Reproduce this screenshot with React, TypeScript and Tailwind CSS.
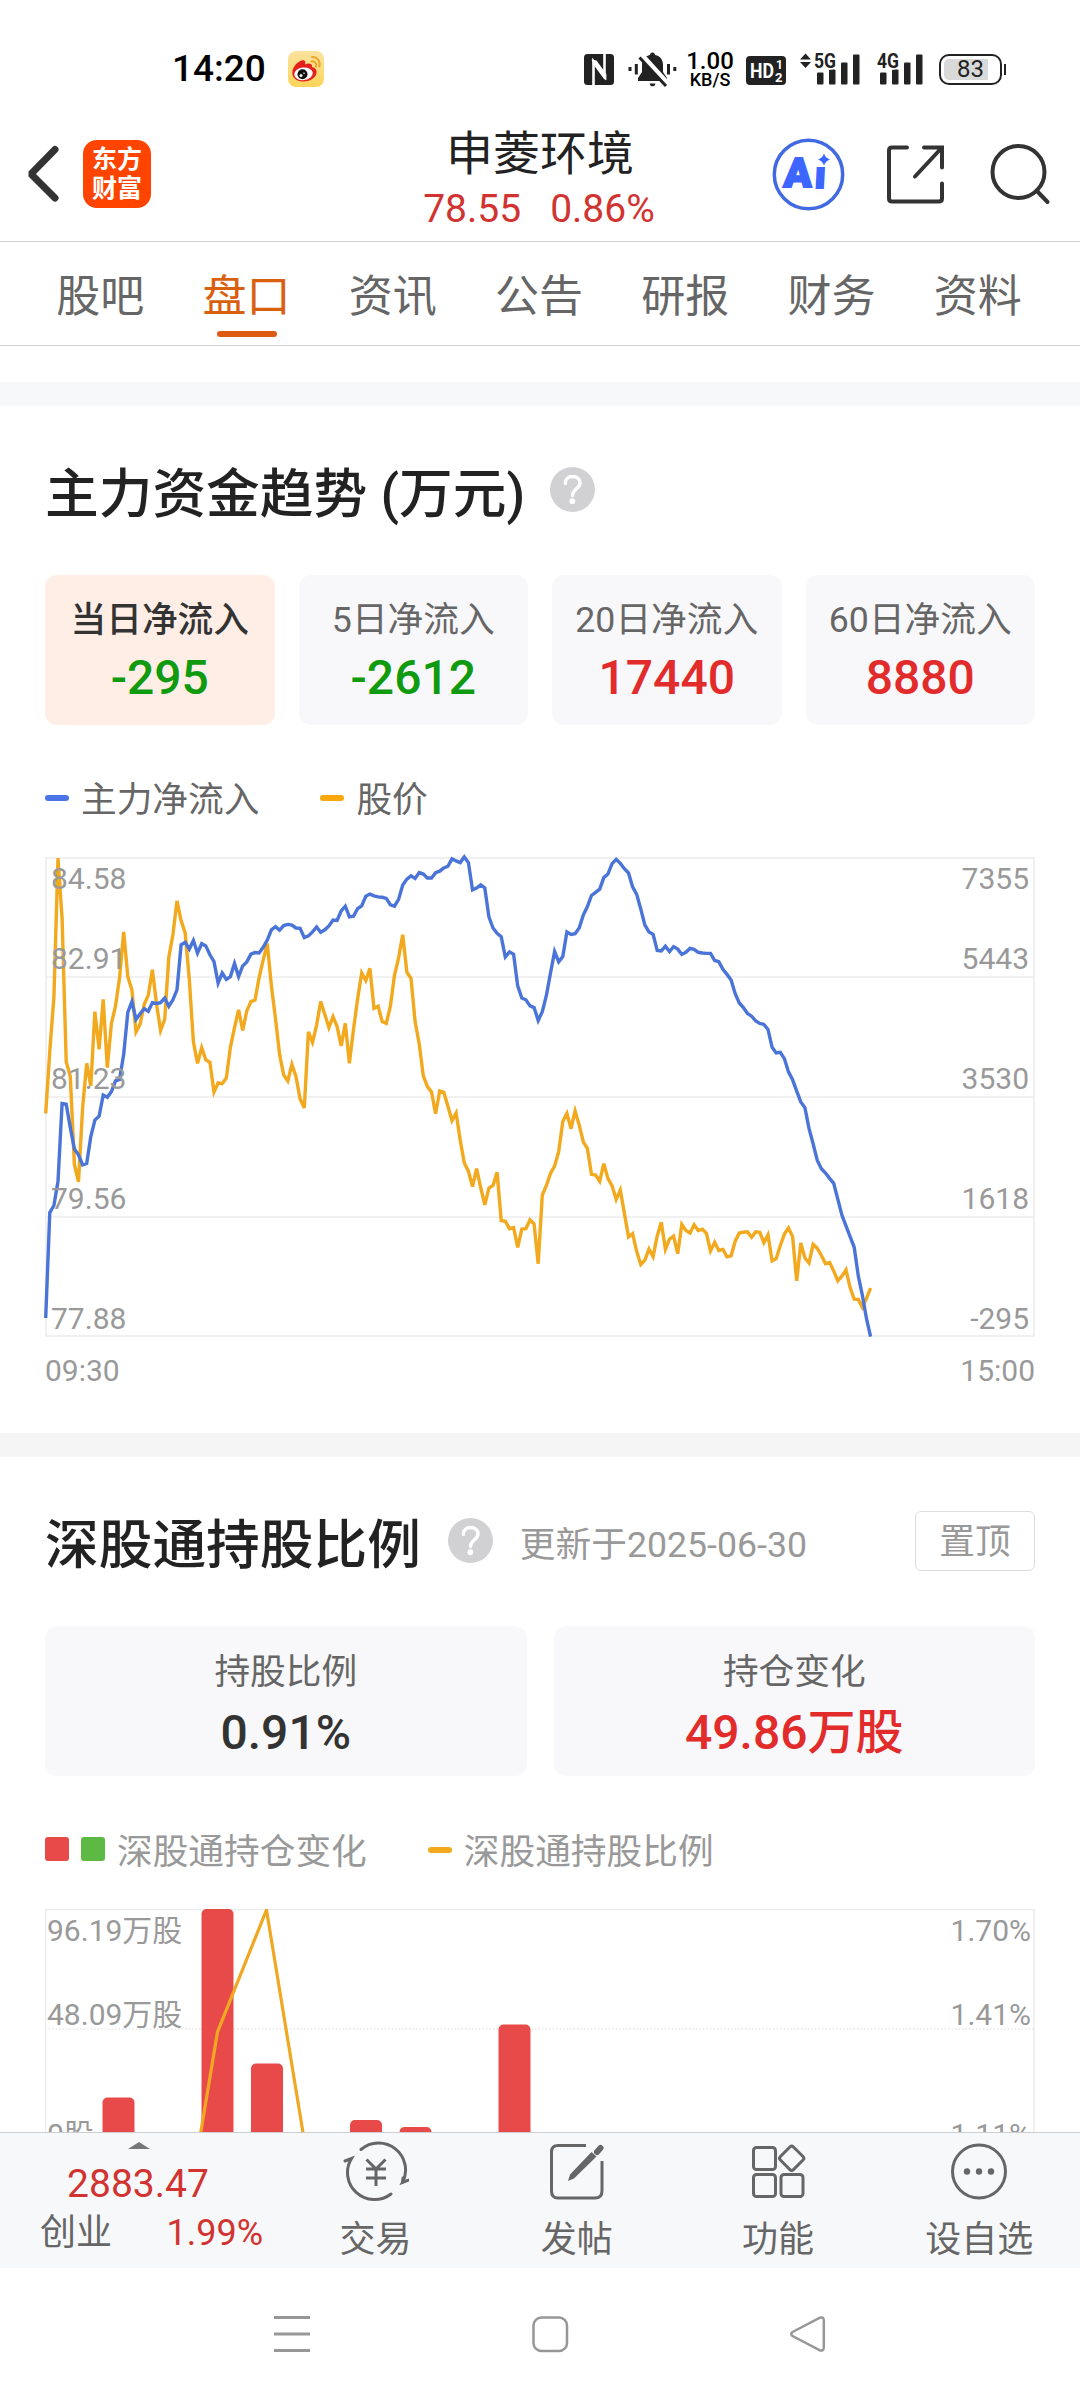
import { ReactNode } from "react";
import clsx from "clsx";

// one value per trading minute, in plot units measured down from the frame top
const inflow = [
    1338, 1043, 1023, 955, 737, 739, 805, 865, 881, 909, 905, 830, 784, 773, 714,
    720, 704, 674, 670, 600, 482, 452, 502, 486, 472, 479, 455, 457, 455, 442,
    465, 447, 419, 293, 286, 305, 281, 316, 290, 296, 321, 340, 400, 372, 390,
    382, 345, 382, 352, 341, 319, 315, 316, 300, 280, 251, 242, 252, 239, 236,
    238, 246, 247, 273, 268, 257, 243, 258, 251, 240, 224, 225, 198, 185, 215,
    213, 192, 184, 157, 151, 156, 159, 160, 163, 181, 185, 166, 126, 109, 100,
    107, 91, 95, 106, 106, 91, 87, 78, 73, 52, 58, 63, 47, 63, 139, 134, 125,
    134, 215, 246, 261, 270, 327, 313, 320, 408, 442, 447, 464, 469, 505, 480,
    435, 372, 312, 341, 326, 257, 264, 262, 246, 210, 186, 155, 146, 137, 105,
    95, 66, 54, 65, 80, 92, 131, 152, 193, 238, 257, 264, 309, 310, 297, 312,
    298, 305, 320, 314, 303, 306, 314, 316, 317, 317, 337, 340, 362, 376, 392,
    430, 456, 469, 485, 493, 506, 513, 516, 530, 580, 596, 594, 612, 649, 671,
    703, 733, 749, 807, 850, 897, 920, 932, 947, 961, 1005, 1050, 1080, 1110,
    1140, 1220, 1275, 1340, 1390,
];

const price = [
    765, 590, 440, 50, 220, 620, 662, 908, 957, 750, 625, 688, 480, 586, 446,
    637, 514, 465, 385, 257, 382, 420, 537, 515, 460, 434, 363, 458, 533, 502,
    328, 265, 170, 225, 260, 390, 565, 625, 581, 615, 622, 705, 680, 682, 666,
    580, 525, 475, 533, 478, 452, 448, 385, 335, 290, 408, 500, 600, 658, 674,
    628, 662, 725, 750, 537, 566, 518, 452, 488, 525, 494, 522, 576, 513, 625,
    530, 445, 372, 393, 359, 471, 465, 508, 513, 465, 378, 330, 265, 370, 387,
    508, 570, 660, 690, 705, 766, 702, 706, 745, 785, 764, 840, 904, 927, 970,
    920, 973, 1021, 974, 967, 930, 1065, 1067, 1088, 1085, 1140, 1089, 1088,
    1063, 1075, 1186, 994, 967, 933, 913, 872, 788, 765, 808, 758, 798, 845,
    864, 936, 938, 955, 906, 947, 968, 1006, 980, 1045, 1111, 1102, 1152, 1188,
    1176, 1145, 1166, 1108, 1070, 1146, 1117, 1109, 1158, 1076, 1093, 1100,
    1077, 1093, 1089, 1101, 1150, 1126, 1149, 1146, 1167, 1164, 1123, 1100,
    1098, 1097, 1112, 1097, 1098, 1127, 1105, 1178, 1172, 1135, 1103, 1086,
    1110, 1234, 1128, 1170, 1184, 1132, 1143, 1163, 1186, 1183, 1206, 1234,
    1221, 1203, 1253, 1285, 1286, 1308, 1283, 1254,
];

const toPoints = (values: number[]) =>
    values
        .map((v, i) => `${(0.7 + i * 4.104).toFixed(1)},${((v - 50) / 2.8 + 1).toFixed(1)}`)
        .join(" ");

const tabs = ["股吧", "盘口", "资讯", "公告", "研报", "财务", "资料"];

const flows = [
    { label: "当日净流入", value: "-295", up: false },
    { label: "5日净流入", value: "-2612", up: false },
    { label: "20日净流入", value: "17440", up: true },
    { label: "60日净流入", value: "8880", up: true },
];

const priceAxis = ["84.58", "82.91", "81.23", "79.56", "77.88"];
const flowAxis = ["7355", "5443", "3530", "1618", "-295"];

// slot = position among the 20 slots of the chart
const holdingBars = [
    { slot: 1, top: 188.5 },
    { slot: 3, top: 0 },
    { slot: 4, top: 154.5 },
    { slot: 6, top: 211 },
    { slot: 7, top: 218 },
    { slot: 9, top: 115.5 },
];

function SignalBars() {
    return (
        <svg width="44" height="31" viewBox="0 0 44 31" fill="#222">
            <rect x="0" y="18.500" width="6.500" height="12" rx="1" />
            <rect x="12" y="15.500" width="6.500" height="15" rx="1" />
            <rect x="24" y="8.500" width="6.500" height="22" rx="1" />
            <rect x="36" y="0.500" width="6.500" height="30" rx="1" />
        </svg>
    );
}

function StatusBar() {
    return (
        <div className="flex h-[107px] items-center pt-[31px] text-black">
            <span className="ml-[172px] w-[93px] text-[37px] leading-[44px] font-medium">14:20</span>
            <svg className="ml-[23px]" width="36" height="36" viewBox="0 0 36 36">
                <defs>
                    <linearGradient id="weibo" x1="0" y1="0" x2="0" y2="1">
                        <stop offset="0" stopColor="#fae3a0" />
                        <stop offset="1" stopColor="#fdd458" />
                    </linearGradient>
                </defs>
                <rect width="36" height="36" rx="8" fill="url(#weibo)" />
                <path
                    d="M4.300 22C4.300 16 10 10 14.500 9.300C17.500 9 17.800 11.500 17 13.500C20 12 24.500 12 24 16C27.500 16.800 29 19 28.500 22C27.500 27.500 21 30.800 14.500 30.500C8.500 30.300 4.500 27 4.300 22Z"
                    fill="#e5211d"
                />
                <ellipse cx="15.500" cy="22.800" rx="9.300" ry="6.300" fill="#fff" transform="rotate(-6 15.500 22.800)" />
                <circle cx="14.500" cy="23.300" r="5" fill="#111" />
                <circle cx="13" cy="24.500" r="1.500" fill="#fff" />
                <circle cx="16" cy="22.300" r="0.800" fill="#fff" />
                <path
                    d="M24 6.200C29 5.500 32.800 10 31.300 15.500M23.500 10.300C27 9.800 29 12.500 28 15.500"
                    fill="none"
                    stroke="#e9a52c"
                    strokeWidth="2"
                    strokeLinecap="round"
                />
            </svg>
            <svg className="ml-[260px]" width="30" height="31" viewBox="0 0 30 31">
                <rect width="30" height="31" rx="3.500" fill="#222" />
                <path d="M9.500 31V7.500L20.500 22.500V0" fill="none" stroke="#fff" strokeWidth="2.600" />
                <path d="M7.600 5.500L12.500 6.500L22.400 20V26L20 25L9 10Z" fill="#fff" />
            </svg>
            <svg className="ml-[14px]" width="50" height="35" viewBox="0 0 50 35">
                <path
                    d="M24.500 0.500C26 0.500 27 1.500 27 3C32.500 4 35 8 35 13V20L39 26V29H10V26L14 20V13C14 8 17 4 22 3C22 1.500 23 0.500 24.500 0.500Z"
                    fill="#222"
                />
                <path d="M21.500 31.500H27.500C27 33.500 26 34.300 24.500 34.300C23 34.300 22 33.500 21.500 31.500Z" fill="#222" />
                <path d="M13.500 3.500L40 32.500" stroke="#fff" strokeWidth="6" />
                <path d="M11.500 5.500L38 34" stroke="#222" strokeWidth="3" />
                <path d="M2 15V19M8.300 12V22.500M40.500 12V22.500M46.800 15V19" stroke="#222" strokeWidth="3" />
            </svg>
            <div className="ml-[6px] flex w-[52px] flex-col items-center font-medium">
                <span className="text-[24px] leading-[20px]">1.00</span>
                <span className="text-[18px] leading-[17px]">KB/S</span>
            </div>
            <svg className="ml-[10px] mt-[2px]" width="40" height="29" viewBox="0 0 40 29">
                <rect width="40" height="29" rx="4" fill="#222" />
                <text x="4" y="22" fill="#fff" className="text-[21px] font-bold" textLength="24" lengthAdjust="spacingAndGlyphs">
                    HD
                </text>
                <text x="30" y="13" fill="#fff" className="text-[12px] font-bold">
                    1
                </text>
                <text x="29" y="25.500" fill="#fff" className="text-[13px] font-bold">
                    2
                </text>
            </svg>
            <div className="relative ml-[31px]">
                <SignalBars />
                <svg className="absolute -left-[17px] -top-[3px] overflow-visible" width="38" height="20" fill="#222">
                    <path d="M0 8.500L5.500 2.500L11 8.500ZM0 11L5.500 17L11 11Z" />
                    <text x="14" y="17" stroke="#fff" strokeWidth="3" paintOrder="stroke" className="text-[21px] font-bold" textLength="22" lengthAdjust="spacingAndGlyphs">
                        5G
                    </text>
                </svg>
            </div>
            <div className="relative ml-[19px]">
                <SignalBars />
                <svg className="absolute -left-[3px] -top-[3px] overflow-visible" width="24" height="20" fill="#222">
                    <text x="0" y="17" stroke="#fff" strokeWidth="3" paintOrder="stroke" className="text-[21px] font-bold" textLength="22" lengthAdjust="spacingAndGlyphs">
                        4G
                    </text>
                </svg>
            </div>
            <div className="ml-[15px] flex items-center gap-[2px]">
                <div className="relative flex h-[31px] w-[63px] items-center justify-center rounded-[10px] border-2 border-[#222]">
                    <div className="absolute left-[3px] top-[3px] h-[21px] w-[44px] rounded-l-[5px] bg-[#d9d9d9]" />
                    <span className="relative text-[24px] leading-[27px] text-[#222]">83</span>
                </div>
                <div className="h-[11px] w-[2px] bg-[#222]" />
            </div>
        </div>
    );
}

function Header() {
    return (
        <div className="flex h-[135px] items-center border-b border-[#d0d1d3]">
            <div className="flex w-[424px] items-center">
                <svg className="ml-[26px]" width="34" height="58" viewBox="0 0 34 58">
                    <path d="M29 4.500L5 29L29 53" fill="none" stroke="#333" strokeWidth="7" strokeLinecap="round" strokeLinejoin="bevel" />
                </svg>
                <div className="ml-[23px] flex h-[68px] w-[68px] flex-col items-center justify-center rounded-[14px] bg-[#ff4400] text-[25px] leading-[29px] font-bold text-white">
                    <span>东方</span>
                    <span>财富</span>
                </div>
            </div>
            <div className="flex w-[232px] flex-col items-center self-stretch pt-[19px]">
                <h1 className="text-[47px] leading-[56px] whitespace-nowrap text-[#222]">申菱环境</h1>
                <div className="mt-px -ml-[2px] flex gap-[29px] text-[39px] leading-[52px] text-[#d13430]">
                    <span>78.55</span>
                    <span>0.86%</span>
                </div>
            </div>
            <div className="flex items-center">
                <svg className="ml-[116px]" width="74" height="74" viewBox="0 0 74 74">
                    <circle cx="36.500" cy="37.500" r="34.200" fill="none" stroke="#4169e1" strokeWidth="3.500" />
                    <g fill="#3c66ff">
                        <text x="14" y="50" stroke="#3c66ff" strokeWidth="2" transform="skewX(-3)" className="text-[41px] font-black" textLength="28" lengthAdjust="spacingAndGlyphs">
                            A
                        </text>
                        <text x="45" y="51.500" stroke="#3c66ff" strokeWidth="2" transform="skewX(-3)" className="text-[38px] font-black">
                            ı
                        </text>
                        <path d="M52 16.500Q53.500 21 58 22.500Q53.500 24 52 28.500Q50.500 24 46 22.500Q50.500 21 52 16.500Z" />
                    </g>
                </svg>
                <svg className="ml-[40px]" width="60" height="60" viewBox="0 0 60 60" fill="none" stroke="#333" strokeWidth="4" strokeLinecap="round">
                    <path d="M21 3.500H6Q3 3.500 3 6.500V54.500Q3 57.500 6 57.500H53Q56 57.500 56 54.500V39.500M38 3.500H56V23.500M56 3.500L29 32.500" />
                </svg>
                <svg className="ml-[43px]" width="62" height="62" viewBox="0 0 62 62" fill="none" stroke="#333" strokeWidth="4" strokeLinecap="round">
                    <circle cx="29.500" cy="29" r="26" />
                    <path d="M47.500 47.500L58.500 59" />
                </svg>
            </div>
        </div>
    );
}

function TabBar() {
    return (
        <nav className="grid h-[104px] grid-cols-7 border-b border-[#d0d1d3] pr-[29px] pl-[27px]">
            {tabs.map((tab) => (
                <div
                    key={tab}
                    className={clsx(
                        "flex flex-col items-center pt-[30px] text-[44px] leading-[50px]",
                        tab === "盘口" ? "text-[#d9600f]" : "text-[#666]"
                    )}
                >
                    {tab}
                    {tab === "盘口" && <div className="mt-[9px] ml-px h-[6px] w-[60px] rounded-full bg-[#dd5a10]" />}
                </div>
            ))}
        </nav>
    );
}

function HelpIcon() {
    return (
        <svg width="45" height="45" viewBox="0 0 45 45" fill="none">
            <circle cx="22.500" cy="22.500" r="22.500" fill="#d1d1d3" />
            <path
                d="M15.300 16.500C15.300 12 18.500 9.500 22.600 9.500C27 9.500 30 12.300 30 16C30 21.500 22.500 22 22.500 28.500"
                stroke="#fff"
                strokeWidth="3.400"
                strokeLinecap="round"
            />
            <circle cx="22.300" cy="34.200" r="2.900" fill="#fff" />
        </svg>
    );
}

function LineKey({ className, children }: { className: string; children: ReactNode }) {
    return (
        <div className="flex items-center gap-[12px]">
            <div className={clsx("-mt-[5px] h-[6px] w-6 rounded-[3px]", className)} />
            <span>{children}</span>
        </div>
    );
}

function FlowChart() {
    return (
        <div className="relative mx-[45px] mt-[31px] h-[480px]">
            <svg className="absolute inset-0 overflow-visible" width="990" height="480" fill="none">
                <path d="M0 120H990M0 240H990M0 360H990" stroke="#f1f1f1" strokeWidth="2" />
                <rect x="1" y="1" width="988" height="478" stroke="#f0f0f0" strokeWidth="2" />
                <polyline points={toPoints(price)} stroke="#f2a91e" strokeWidth="3.400" />
                <polyline points={toPoints(inflow)} stroke="#4a74d8" strokeWidth="3.400" />
            </svg>
            <div className="relative flex justify-between px-[6px] text-[30px] leading-[40px] text-[#999]">
                {[priceAxis, flowAxis].map((axis, side) => (
                    <div key={side} className={clsx("flex h-[480px] flex-col", side === 1 && "items-end")}>
                        <span className="mt-[2px] h-[40px]">{axis[0]}</span>
                        <span className="mt-[40px] h-[40px]">{axis[1]}</span>
                        {axis.slice(2).map((label) => (
                            <span key={label} className="mt-[80px] h-[40px]">
                                {label}
                            </span>
                        ))}
                    </div>
                ))}
            </div>
        </div>
    );
}

function HoldingChart() {
    return (
        <div className="relative mx-[45px] mt-[31px] h-[223px] overflow-hidden">
            <svg className="absolute inset-0" width="990" height="223" fill="none">
                <path d="M0.500 223V0.500H989V223" stroke="#ececec" strokeWidth="1.500" />
                <path d="M0 120H990" stroke="#e8e8e8" strokeWidth="1.500" strokeDasharray="1.500 2" />
                {holdingBars.map((bar) => (
                    <rect key={bar.slot} x={bar.slot * 49.5 + 8} y={bar.top} width="32" height="240" rx="5" fill="#e84a4a" />
                ))}
                <polyline points="123,420 172.500,123 221.500,1 271,303" stroke="#f0a822" strokeWidth="3.200" />
            </svg>
            <div className="relative flex justify-between pr-[4px] pl-[2px] text-[30px] leading-[40px] text-[#999]">
                <div className="flex flex-col">
                    <span className="mt-[2px]">96.19万股</span>
                    <span className="mt-[44px]">48.09万股</span>
                    <span className="mt-[80px]">0股</span>
                </div>
                <div className="flex flex-col items-end">
                    <span className="mt-[2px]">1.70%</span>
                    <span className="mt-[44px]">1.41%</span>
                    <span className="mt-[80px]">1.11%</span>
                </div>
            </div>
        </div>
    );
}

function BottomItem({ label, children }: { label: string; children: ReactNode }) {
    return (
        <div className="flex flex-1 flex-col items-center pt-[8px] text-[36px] leading-[44px] text-[#666]">
            <svg width="66" height="62" viewBox="0 0 66 62" fill="none" stroke="#666" strokeWidth="3" strokeLinecap="round">
                {children}
            </svg>
            <span className="mt-[15px]">{label}</span>
        </div>
    );
}

function BottomBar() {
    return (
        <div className="flex h-[136px] border-t border-[#ccced2] bg-[#f7f8fa]">
            <div className="flex w-[275px] flex-col items-center pt-[9px]">
                <svg width="22" height="7" viewBox="0 0 22 7" className="mr-[-2px]">
                    <path d="M0 7L11 0L22 7Z" fill="#777" />
                </svg>
                <span className="mt-[12px] mr-[-1px] text-[39px] leading-[46px] text-[#d13430]">2883.47</span>
                <div className="mt-px flex w-full justify-between pr-[12px] pl-[40px] text-[36px] leading-[50px]">
                    <span className="text-[#666]">创业</span>
                    <span className="text-[#d13430]">1.99%</span>
                </div>
            </div>
            <BottomItem label="交易">
                <path d="M18 8.500A27 27 0 0 1 59.500 41.500L66 39M59.500 41.500L60 37M48 53A27 27 0 0 1 8.500 17.500L2 20" />
                <path d="M23.500 18.500L33 28L42.500 18.500M23 28H43M23 37H43M33 28V45" strokeLinecap="butt" />
            </BottomItem>
            <BottomItem label="发帖">
                <path d="M42 4.500H14Q7.500 4.500 7.500 11V50Q7.500 57 14 57H51Q58 57 58 50V20" strokeLinecap="butt" />
                <path d="M24 40L26 33.500L47.500 11L52.500 15.500L30 37.500Z" fill="#666" stroke="none" />
                <path d="M53 11L56.500 7" strokeWidth="6" />
            </BottomItem>
            <BottomItem label="功能">
                <rect x="8.500" y="6.500" width="22" height="22" rx="3" />
                <rect x="8.500" y="33.500" width="22" height="22" rx="3" />
                <rect x="36" y="33.500" width="22" height="22" rx="3" />
                <rect x="37.500" y="8" width="18.500" height="18.500" rx="2.500" transform="rotate(45 46.700 17.200)" />
            </BottomItem>
            <BottomItem label="设自选">
                <circle cx="33" cy="30.500" r="26.500" />
                <g fill="#666" stroke="none">
                    <circle cx="21" cy="30.500" r="3.200" />
                    <circle cx="33" cy="30.500" r="3.200" />
                    <circle cx="45" cy="30.500" r="3.200" />
                </g>
            </BottomItem>
        </div>
    );
}

function SystemNav() {
    return (
        <div className="flex h-[132px] items-center text-[#979797]">
            <svg className="ml-[273px]" width="38" height="38" viewBox="0 0 38 38" stroke="currentColor" strokeWidth="3">
                <path d="M1 2.500H37M1 19H37M1 35.500H37" />
            </svg>
            <svg className="ml-[220px]" width="38" height="38" viewBox="0 0 38 38" fill="none" stroke="currentColor" strokeWidth="2.500">
                <rect x="2.500" y="2.500" width="33.500" height="33.500" rx="8" />
            </svg>
            <svg className="ml-[220px]" width="38" height="38" viewBox="0 0 38 38" fill="none" stroke="currentColor" strokeWidth="2.500">
                <path d="M3.500 17L30.500 2.800Q34.500 1.500 34.800 5V33Q34.500 36.500 30.500 35.200L3.500 21Q1 19 3.500 17Z" />
            </svg>
        </div>
    );
}

export default function App() {
    return (
        <div className="flex h-[2400px] w-[1080px] flex-col overflow-hidden bg-white font-['Roboto','Noto_Sans_CJK_SC',sans-serif]">
            <StatusBar />
            <Header />
            <TabBar />
            <div className="mt-[36px] h-6 bg-[#f7f8fa]" />

            <section className="h-[1027px]">
                <div className="flex items-center gap-[25px] px-[45px] pt-[54px]">
                    <h2 className="text-[53.700px] leading-[70px] font-medium text-[#222]">主力资金趋势 (万元)</h2>
                    <div className="-mt-[11px]">
                        <HelpIcon />
                    </div>
                </div>
                <div className="mt-[45px] grid grid-cols-4 gap-6 px-[45px]">
                    {flows.map((flow, i) => (
                        <div
                            key={flow.label}
                            className={clsx(
                                "flex h-[150px] flex-col items-center rounded-[12px] pt-[21px]",
                                i === 0 ? "bg-[#ffeee6]" : "bg-[#f8f8fa]"
                            )}
                        >
                            <span
                                className={clsx(
                                    "text-[35.700px] leading-[48px] whitespace-nowrap",
                                    i === 0 ? "font-medium text-[#333]" : "text-[#666]"
                                )}
                            >
                                {flow.label}
                            </span>
                            <span
                                className={clsx(
                                    "mt-[6px] text-[48px] leading-[56px] font-medium",
                                    flow.up ? "text-[#e22b2b]" : "text-[#109a10]"
                                )}
                            >
                                {flow.value}
                            </span>
                        </div>
                    ))}
                </div>
                <div className="mt-[50px] flex gap-[61px] px-[45px] text-[35.700px] leading-[50px] text-[#666]">
                    <LineKey className="bg-[#4a74e8]">主力净流入</LineKey>
                    <LineKey className="bg-[#f8a80d]">股价</LineKey>
                </div>
                <div className="pt-px">
                    <FlowChart />
                </div>
                <div className="mt-[14px] flex justify-between px-[45px] text-[30px] leading-[40px] text-[#999]">
                    <span>09:30</span>
                    <span>15:00</span>
                </div>
            </section>

            <div className="h-6 bg-[#f5f5f6]" />

            <section className="h-[675px]">
                <div className="flex items-center px-[45px] pt-[54px]">
                    <h2 className="text-[53.700px] leading-[70px] font-medium text-[#222]">深股通持股比例</h2>
                    <div className="-mt-[11px] ml-[27px]">
                        <HelpIcon />
                    </div>
                    <span className="ml-[27px] text-[35.700px] text-[#999]">更新于2025-06-30</span>
                    <button className="-mt-[10px] ml-auto h-[60px] w-[120px] rounded-[6px] border border-[#dcdcdc] pt-[2px] text-[35.700px] leading-[56px] text-[#999]">
                        置顶
                    </button>
                </div>
                <div className="mt-[45px] grid grid-cols-2 gap-[27px] px-[45px]">
                    <div className="flex h-[150px] flex-col items-center rounded-[12px] bg-[#f8f8fa] pt-[22px]">
                        <span className="text-[35.700px] leading-[48px] text-[#666]">持股比例</span>
                        <span className="mt-[9px] text-[48px] leading-[56px] font-medium text-[#333]">0.91%</span>
                    </div>
                    <div className="flex h-[150px] flex-col items-center rounded-[12px] bg-[#f8f8fa] pt-[22px]">
                        <span className="text-[35.700px] leading-[48px] text-[#666]">持仓变化</span>
                        <span className="mt-[9px] text-[48px] leading-[56px] font-medium text-[#e22b2b]">49.86万股</span>
                    </div>
                </div>
                <div className="mt-[51px] flex items-center gap-[61px] px-[45px] text-[35.700px] leading-[50px] text-[#999]">
                    <div className="flex items-center">
                        <div className="-mt-[7px] h-6 w-6 rounded-[3px] bg-[#e84a4a]" />
                        <div className="-mt-[7px] ml-3 h-6 w-6 rounded-[3px] bg-[#5cb944]" />
                        <span className="ml-[12px]">深股通持仓变化</span>
                    </div>
                    <LineKey className="bg-[#f2aa1c]">深股通持股比例</LineKey>
                </div>
                <div className="pt-px">
                    <HoldingChart />
                </div>
            </section>

            <BottomBar />
            <SystemNav />
        </div>
    );
}
